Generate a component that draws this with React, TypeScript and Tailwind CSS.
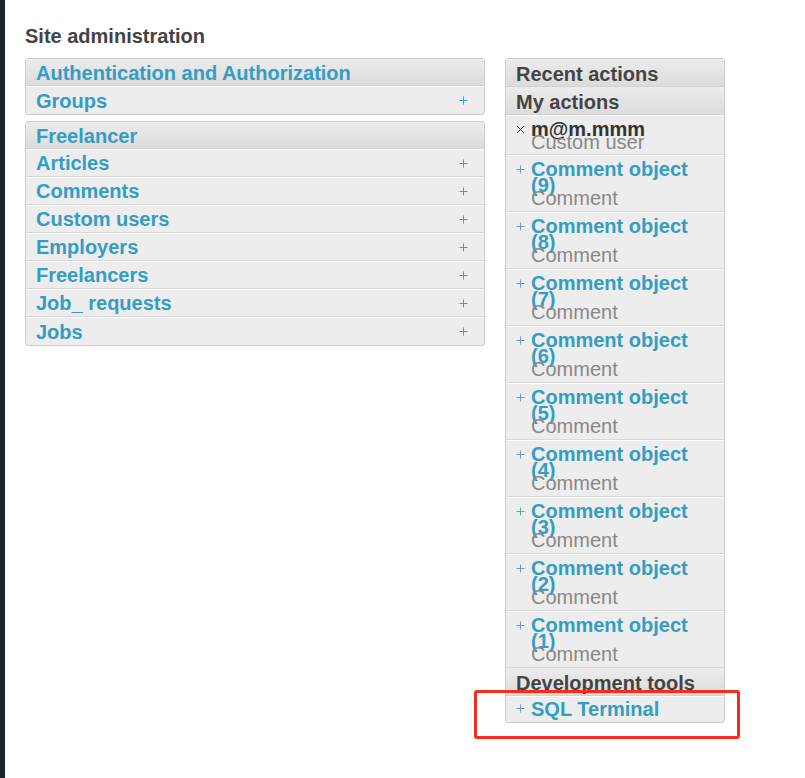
import React from "react";

const font = { fontFamily: '"Liberation Sans", Arial, sans-serif' };

type Module = { title: string; models: string[] };

const modules: Module[] = [
  { title: "Authentication and Authorization", models: ["Groups"] },
  {
    title: "Freelancer",
    models: ["Articles", "Comments", "Custom users", "Employers", "Freelancers", "Job_ requests", "Jobs"],
  },
];

const actions = [9, 8, 7, 6, 5, 4, 3, 2, 1];

function Plus({ className = "" }: { className?: string }) {
  return (
    <svg width="9" height="9" viewBox="0 0 9 9" className={className}>
      <path d="M4.5 0.5v8M0.5 4.5h8" stroke="currentColor" strokeWidth="1" />
    </svg>
  );
}

function Cross({ className = "" }: { className?: string }) {
  return (
    <svg width="9" height="9" viewBox="0 0 9 9" className={className}>
      <path d="M1 1l7 7M8 1l-7 7" stroke="currentColor" strokeWidth="1" />
    </svg>
  );
}

function Header({ children, dark = false }: { children: React.ReactNode; dark?: boolean }) {
  return (
    <div
      className={`flex items-center px-[10px] pt-[2px] border-b border-[#d2d2d2] bg-gradient-to-b from-[#ececec] to-[#dcdcdc] text-[20px] font-bold leading-none ${
        dark ? "h-[28px] text-[#444]" : "h-[27px] text-[#339dc3]"
      }`}
    >
      {children}
    </div>
  );
}

export default function App() {
  return (
    <div className="min-h-[778px] w-[805px] bg-white flex" style={font}>
      <div className="w-[5px] bg-[#1e2226] shrink-0" />
      <div className="pl-[20px] pt-[24px] flex-1">
        <h1 className="text-[20px] font-bold text-[#434343] leading-[24px] mb-[10px]">Site administration</h1>
        <div className="flex gap-[20px] items-start">
          {/* App list */}
          <div className="w-[460px] flex flex-col gap-[6px]">
            {modules.map((m) => (
              <div key={m.title} className="border border-[#cdcdcd] rounded-[3px] bg-[#ededed] overflow-hidden">
                <Header>{m.title}</Header>
                {m.models.map((name, i) => (
                  <div
                    key={name}
                    className={`h-[28px] flex items-center justify-between px-[10px] border-t border-white ${
                      i < m.models.length - 1 ? "border-b border-b-[#d6d6d6]" : ""
                    }`}
                  >
                    <span className="text-[20px] font-bold text-[#339dc3] leading-none">{name}</span>
                    <Plus className="text-[#3fa2c6] mr-[6px]" />
                  </div>
                ))}
              </div>
            ))}
          </div>

          {/* Recent actions */}
          <div className="relative w-[220px]">
            <div className="border border-[#cdcdcd] rounded-[3px] bg-[#ededed] overflow-hidden">
              <Header dark>Recent actions</Header>
              <Header dark>My actions</Header>
              <div className="flex pl-[10px] pt-[5px] pb-[7px] border-b border-[#d8d8d8] border-t border-t-white">
                <span className="w-[15px] pt-[4px]">
                  <Cross className="text-[#333]" />
                </span>
                <div className="w-[170px]">
                  <div className="text-[20px] font-bold leading-[16px] text-[#333]">m@m.mmm</div>
                  <div className="text-[20px] leading-[10px] text-[#888]">Custom user</div>
                </div>
              </div>
              {actions.map((n) => (
                <div key={n} className="flex pl-[10px] pt-[5px] pb-[8px] border-b border-[#d8d8d8] border-t border-t-white">
                  <span className="w-[15px] pt-[4px]">
                    <Plus className="text-[#6f9fb2]" />
                  </span>
                  <div className="w-[170px]">
                    <div className="text-[20px] font-bold leading-[16px] text-[#339dc3]">Comment object ({n})</div>
                    <div className="text-[20px] leading-[10px] text-[#888]">Comment</div>
                  </div>
                </div>
              ))}
              <Header dark>Development tools</Header>
              <div className="h-[26px] flex items-center pl-[10px] pb-[2px] border-t border-white">
                <span className="w-[15px]">
                  <Plus className="text-[#6f9fb2]" />
                </span>
                <span className="text-[20px] font-bold leading-none text-[#339dc3]">SQL Terminal</span>
              </div>
            </div>
            {/* annotation highlight */}
            <div className="absolute left-[-31px] top-[632px] w-[266px] h-[49px] border-[3px] border-[#fc2a1c] rounded-[3px] pointer-events-none" />
          </div>
        </div>
      </div>
    </div>
  );
}
